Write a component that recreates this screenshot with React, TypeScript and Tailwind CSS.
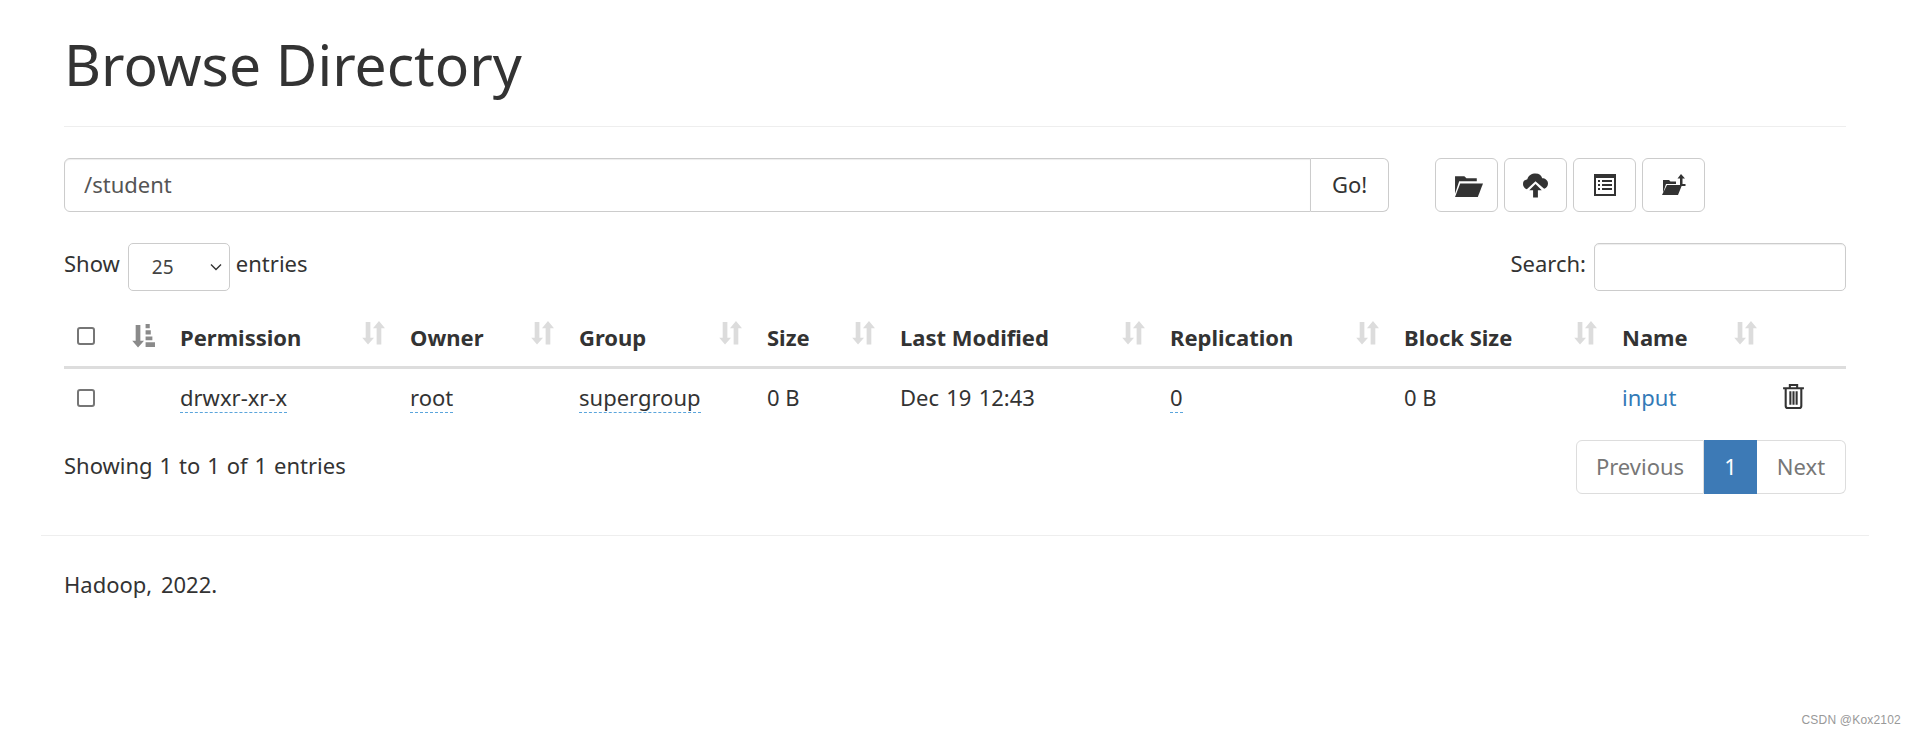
const font = "font-['Noto_Sans',sans-serif]";

function SortIcon({ active }: { active?: boolean }) {
  return (
    <svg viewBox="0 0 22 23" className={active ? "w-[23px] h-[24px] fill-[#8a8a8a]" : "w-[23px] h-[24px] fill-[#dcdcdc]"}>
      <path d="M3.500 1h4.500v15h3.500l-5.750 6.500L.2 16h3.300z" />
      {active ? (
        <path d="M13 0h4v4h-4zM13 6h5v4h-5zM13 12h6.500v3.500H13zM13 17.500h9V22h-9z" />
      ) : (
        <path d="M16.250 0l5.750 7H18.500v15.500H14V7h-3.500z" />
      )}
    </svg>
  );
}

const columns = [
  { label: "Permission", width: "w-[230px]" },
  { label: "Owner", width: "w-[169px]" },
  { label: "Group", width: "w-[188px]" },
  { label: "Size", width: "w-[133px]" },
  { label: "Last Modified", width: "w-[270px]" },
  { label: "Replication", width: "w-[234px]" },
  { label: "Block Size", width: "w-[218px]" },
  { label: "Name", width: "w-[160px]" },
];

function Tip({ children }: { children: string }) {
  return <span className="border-b-[1.5px] border-dashed border-[#5aa5dc]">{children}</span>;
}

function IconButton({ children }: { children: React.ReactNode }) {
  return (
    <button className="w-[63px] h-[54px] flex items-center justify-center bg-white border border-[#cccccc] rounded-[6px]">
      {children}
    </button>
  );
}

export default function App() {
  return (
    <div className={`relative h-[736px] bg-white text-[#333333] text-[22px] overflow-hidden ${font}`}>
      <div className="ml-[41px] mr-[46px] px-[23px]">
        <div className="h-[127px] border-b border-[#eeeeee] pt-[25px]">
          <h1 className="text-[57px] leading-[78px] font-normal">Browse Directory</h1>
        </div>
        <div className="flex mt-[31px] h-[54px]">
          <div className="w-[1325px] flex">
            <input
              readOnly
              value="/student"
              className="flex-1 min-w-0 px-[19px] pb-[2px] border border-[#cccccc] rounded-l-[6px] text-[#555555] shadow-[inset_0_1px_1px_rgba(0,0,0,0.075)] outline-none"
            />
            <button className="w-[78px] pb-[2px] border border-l-0 border-[#cccccc] rounded-r-[6px]">Go!</button>
          </div>
          <div className="flex gap-[6px] ml-[46px]">
            <IconButton>
              <svg viewBox="0 0 28 22" className="w-[29px] h-[23px] ml-[3px] fill-[#333333]">
                <path d="M1 5V2h9l2 2h10v3H5L1 19z" />
                <path d="M6 9h22l-5 13H1z" />
              </svg>
            </IconButton>
            <IconButton>
              <svg viewBox="0 0 26 26" className="w-[25px] h-[26px] fill-[#333333]">
                <path d="M13 1c4 0 6 2 7 5 3 0 6 2 6 5.500 0 2.500-1.500 4.500-4 5.500L13 9 4 17.500c-2.500-1-4-3-4-5.500 0-3 2-4.500 4.500-5C5.500 3 9 1 13 1z" />
                <path d="M13 12l6.500 6.500H15.500V26h-5v-7.500H6.500z" />
              </svg>
            </IconButton>
            <IconButton>
              <svg viewBox="0 0 22 22" className="w-[22px] h-[22px]">
                <path fillRule="evenodd" className="fill-[#333333]" d="M0 0h22v22H0zM2 4v16h18V4z" />
                <path className="fill-[#333333]" d="M4 6h2v2H4zM8 6h10v2H8zM4 10h2v2H4zM8 10h10v2H8zM4 14h2v2H4zM8 14h10v2H8z" />
              </svg>
            </IconButton>
            <IconButton>
              <svg viewBox="0 0 24 22" className="w-[24px] h-[22px] fill-[#333333]">
                <path d="M1 8V6h6l1.500 1.500H14V10H4L1 19z" />
                <path d="M5 11h15l-4 10H0z" />
                <path d="M19 0l4 4.500h-2.500V10h3v2H18V4.500h-2.500z" />
              </svg>
            </IconButton>
          </div>
        </div>
        <div className="flex items-center justify-between mt-[31px] h-[48px]">
          <div className="flex items-center">
            <span className="pb-[8px]">Show</span>
            <div className="relative w-[102px] h-[48px] ml-[8px] mr-[6px] border border-[#cccccc] rounded-[5px] flex items-center pl-[23px] text-[19px] text-[#444444]">
              25
              <svg viewBox="0 0 12 8" className="absolute right-[7px] top-[19px] w-[12px] h-[8px] fill-none stroke-[#333333] stroke-[1.4]">
                <path d="M1 1.500l5 5 5-5" />
              </svg>
            </div>
            <span className="pb-[8px]">entries</span>
          </div>
          <div className="flex items-center">
            <span className="pb-[8px]">Search:</span>
            <input className="w-[252px] h-[48px] ml-[8px] border border-[#cccccc] rounded-[5px] shadow-[inset_0_1px_1px_rgba(0,0,0,0.075)] outline-none" />
          </div>
        </div>
        <table className="w-full table-fixed mt-[16px] border-collapse">
          <colgroup>
            <col className="w-[56px]" />
            <col className="w-[48px]" />
            {columns.map((c) => (
              <col key={c.label} className={c.width} />
            ))}
            <col className="w-[76px]" />
          </colgroup>
          <thead>
            <tr className="h-[60px] border-b-[3px] border-[#dddddd]">
              <th className="pl-[13px] text-left align-middle">
                <span className="block w-[18px] h-[18px] border-2 border-[#767676] rounded-[3px]" />
              </th>
              <th className="pl-[12px] text-left align-middle">
                <SortIcon active />
              </th>
              {columns.map((c) => (
                <th key={c.label} className="relative pl-[12px] pt-[2px] text-left font-bold">
                  {c.label}
                  <span className="absolute right-[13px] top-[14px]">
                    <SortIcon />
                  </span>
                </th>
              ))}
              <th />
            </tr>
          </thead>
          <tbody>
            <tr className="h-[60px]">
              <td className="pl-[13px]">
                <span className="block w-[18px] h-[18px] border-2 border-[#767676] rounded-[3px]" />
              </td>
              <td />
              <td className="pl-[12px]"><Tip>drwxr-xr-x</Tip></td>
              <td className="pl-[12px]"><Tip>root</Tip></td>
              <td className="pl-[12px]"><Tip>supergroup</Tip></td>
              <td className="pl-[12px]">0 B</td>
              <td className="pl-[12px] [word-spacing:1.5px]">Dec 19 12:43</td>
              <td className="pl-[12px]"><Tip>0</Tip></td>
              <td className="pl-[12px]">0 B</td>
              <td className="pl-[12px] text-[#337ab7]">input</td>
              <td className="pl-[13px] pb-[3px]">
                <svg viewBox="0 0 20 24" className="w-[21px] h-[25px] fill-none stroke-[#333333] stroke-2">
                  <path d="M0 4h20M6.500 4V1h7v3M2.500 4v17q0 2 2 2h11q2 0 2-2V4M7 7v13M10 7v13M13 7v13" />
                </svg>
              </td>
            </tr>
          </tbody>
        </table>
        <div className="flex items-center justify-between mt-[13px]">
          <span className="pb-[4px] [word-spacing:1.2px]">Showing 1 to 1 of 1 entries</span>
          <div className="flex h-[54px] items-stretch">
            <span className="w-[128px] flex items-center justify-center pb-[1px] border border-[#dddddd] rounded-l-[6px] text-[#777777]">Previous</span>
            <span className="w-[53px] flex items-center justify-center pb-[1px] bg-[#3d7ab6] text-white">1</span>
            <span className="w-[89px] flex items-center justify-center pb-[1px] border border-l-0 border-[#dddddd] rounded-r-[6px] text-[#777777]">Next</span>
          </div>
        </div>
      </div>
      <div className="ml-[41px] mr-[46px] mt-[41px] border-t border-[#eeeeee] px-[23px] pt-[32px] [word-spacing:3px]">Hadoop, 2022.</div>
      <div className="absolute right-[14px] bottom-[7px] text-[12px] tracking-[0.2px] text-[#999999] font-['Liberation_Sans',sans-serif]">CSDN @Kox2102</div>
    </div>
  );
}
